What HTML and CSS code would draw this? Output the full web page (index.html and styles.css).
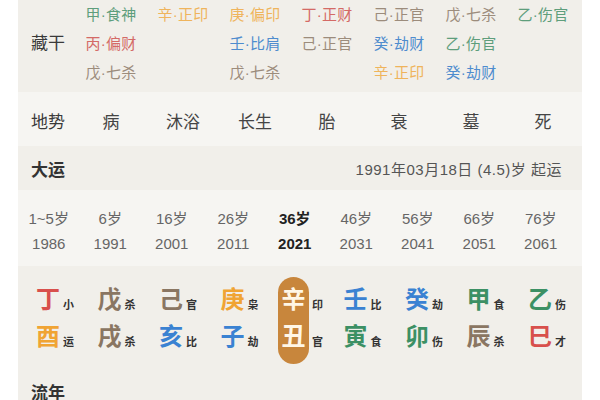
FILE: index.html
```html
<!DOCTYPE html>
<html lang="zh">
<head>
<meta charset="utf-8">
<link rel="stylesheet" href="styles.css">
</head>
<body>
<div class="card">
  <section class="cg">
    <div class="label cg-label">藏干</div>
    <div class="cg-grid">
      <span class="c-green">甲·食神</span><span class="c-yellow">辛·正印</span><span class="c-yellow">庚·偏印</span><span class="c-red">丁·正财</span><span class="c-brown">己·正官</span><span class="c-brown">戊·七杀</span><span class="c-green">乙·伤官</span>
      <span class="c-red">丙·偏财</span><span></span><span class="c-blue">壬·比肩</span><span class="c-brown">己·正官</span><span class="c-blue">癸·劫财</span><span class="c-green">乙·伤官</span><span></span>
      <span class="c-brown">戊·七杀</span><span></span><span class="c-brown">戊·七杀</span><span></span><span class="c-yellow">辛·正印</span><span class="c-blue">癸·劫财</span><span></span>
    </div>
  </section>
  <section class="ds light">
    <div class="label">地势</div>
    <div class="ds-grid">
      <span>病</span><span>沐浴</span><span>长生</span><span>胎</span><span>衰</span><span>墓</span><span>死</span>
    </div>
  </section>
  <section class="dy-head">
    <div class="label bold">大运</div>
    <div class="dy-start">1991年03月18日 (4.5)岁 起运</div>
  </section>
  <section class="dy-list light">
    <div class="dy-col"><span>1~5岁</span><span>1986</span></div>
    <div class="dy-col"><span>6岁</span><span>1991</span></div>
    <div class="dy-col"><span>16岁</span><span>2001</span></div>
    <div class="dy-col"><span>26岁</span><span>2011</span></div>
    <div class="dy-col cur"><span>36岁</span><span>2021</span></div>
    <div class="dy-col"><span>46岁</span><span>2031</span></div>
    <div class="dy-col"><span>56岁</span><span>2041</span></div>
    <div class="dy-col"><span>66岁</span><span>2051</span></div>
    <div class="dy-col"><span>76岁</span><span>2061</span></div>
  </section>
  <section class="gz">
    <div class="gz-col"><div class="big"><span class="k-red">丁</span><span class="k-yellow">酉</span></div><div class="small"><span>小</span><span>运</span></div></div>
    <div class="gz-col"><div class="big"><span class="k-brown">戊</span><span class="k-brown">戌</span></div><div class="small"><span>杀</span><span>杀</span></div></div>
    <div class="gz-col"><div class="big"><span class="k-brown">己</span><span class="k-blue">亥</span></div><div class="small"><span>官</span><span>比</span></div></div>
    <div class="gz-col"><div class="big"><span class="k-yellow">庚</span><span class="k-blue">子</span></div><div class="small"><span>枭</span><span>劫</span></div></div>
    <div class="gz-col"><div class="big pill"><span>辛</span><span>丑</span></div><div class="small"><span>印</span><span>官</span></div></div>
    <div class="gz-col"><div class="big"><span class="k-blue">壬</span><span class="k-green">寅</span></div><div class="small"><span>比</span><span>食</span></div></div>
    <div class="gz-col"><div class="big"><span class="k-blue">癸</span><span class="k-green">卯</span></div><div class="small"><span>劫</span><span>伤</span></div></div>
    <div class="gz-col"><div class="big"><span class="k-green">甲</span><span class="k-brown">辰</span></div><div class="small"><span>食</span><span>杀</span></div></div>
    <div class="gz-col"><div class="big"><span class="k-green">乙</span><span class="k-red">巳</span></div><div class="small"><span>伤</span><span>才</span></div></div>
  </section>
  <section class="ln">
    <div class="label bold">流年</div>
  </section>
</div>
</body>
</html>
```
FILE: styles.css
```css
* { box-sizing: border-box; }
html, body { margin: 0; padding: 0; background: #ffffff; }
body {
  font-family: "Liberation Sans", "Noto Sans CJK SC", sans-serif;
  color: #444;
  width: 600px;
  height: 400px;
  overflow: hidden;
}
.card {
  margin-left: 18px;
  width: 564px;
  background: #f1efea;
}
section { display: flex; }
.light { background: #f6f5f2; }
.label {
  font-size: 17px;
  color: #3a3a3a;
  padding-left: 13px;
  width: 57px;
  flex: none;
}
.bold { font-weight: 700; color: #333; }

/* 藏干 */
.cg { height: 92px; align-items: flex-start; }
.cg-label { line-height: 29px; padding-top: 29px; }
.cg-grid {
  display: grid;
  grid-template-columns: repeat(7, 72px);
  grid-auto-rows: 29px;
  font-size: 15px;
  line-height: 29px;
  text-align: center;
  letter-spacing: 0.3px;
}
.c-green { color: #5e9e7c; }
.c-yellow { color: #efb45c; }
.c-red { color: #d46a66; }
.c-blue { color: #4e8cce; }
.c-brown { color: #9c8c7c; }

/* 地势 */
.ds { height: 54px; align-items: center; padding-top: 2px; }
.ds-grid {
  display: grid;
  grid-template-columns: repeat(7, 72px);
  font-size: 17px;
  color: #444;
  text-align: center;
}

/* 大运 header */
.dy-head {
  height: 44px;
  align-items: center;
  justify-content: space-between;
  padding-right: 20px;
}
.dy-start { font-size: 15px; letter-spacing: 0.5px; color: #555; }

/* 大运 list */
.dy-list {
  height: 76px;
  padding-top: 16px;
  display: grid;
  grid-template-columns: repeat(9, 61.5px);
  align-content: start;
}
.dy-col {
  display: flex;
  flex-direction: column;
  align-items: center;
  font-size: 15px;
  line-height: 25px;
  color: #666;
}
.dy-col.cur { color: #222; font-weight: 700; }

/* 干支 */
.gz {
  padding-top: 15px;
  display: grid;
  grid-template-columns: repeat(9, 61.5px);
}
.gz-col {
  display: flex;
  padding-left: 18px;
  gap: 3px;
}
.big {
  display: flex;
  flex-direction: column;
  font-size: 24px;
  line-height: 37px;
  font-weight: 700;
  width: 24px;
}
.small {
  display: flex;
  flex-direction: column;
  font-size: 11px;
  line-height: 37px;
  font-weight: 700;
  color: #333;
  padding-top: 6px;
}
.pill {
  width: 31px;
  margin-left: -4px;
  padding: 4px 3.5px 3px;
  margin-top: -4px;
  margin-bottom: -3px;
  background: #c8863c;
  border-radius: 16px;
  color: #fff6e6;
  font-weight: 600;
}
.k-red { color: #d8504c; }
.k-yellow { color: #f0a434; }
.k-brown { color: #8a7662; }
.k-blue { color: #3a82d2; }
.k-green { color: #3c9064; }

/* 流年 */
.ln { padding-top: 18px; height: 60px; }
```
